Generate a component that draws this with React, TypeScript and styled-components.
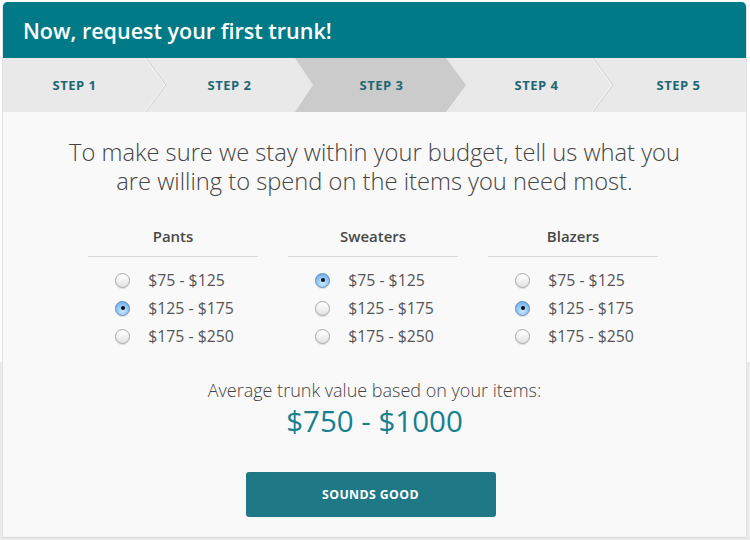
import React, { useState } from "react";
import styled, { createGlobalStyle } from "styled-components";

const Global = createGlobalStyle`
  html, body { margin: 0; padding: 0; }
  body {
    font-family: "Open Sans", "Liberation Sans", sans-serif;
    background: linear-gradient(to bottom, #ffffff 362px, #ebebeb 362px);
    min-height: 540px;
  }
`;

const Card = styled.div`
  margin: 2px 3px 0 2px;
  width: 745px;
  height: 536px;
  box-sizing: border-box;
  border-radius: 5px 5px 0 0;
  background: #f9f9f9;
  border-left: 1px solid #e2e2e2;
  border-right: 1px solid #e2e2e2;
  border-bottom: 1px solid #d8d8d8;
  overflow: hidden;
  display: flex;
  flex-direction: column;
`;

const Header = styled.div`
  height: 56px;
  margin: 0 -1px;
  background: #017a87;
  color: #fff;
  display: flex;
  align-items: center;
  padding: 0 21px;
  font-size: 21.5px;
  font-weight: 600;
  border-radius: 5px 5px 0 0;
`;

const StepBar = styled.div`
  display: grid;
  grid-template-columns: repeat(5, 1fr);
  height: 54px;
  background: #e9e9e9;
  margin: 0 -1px;
`;

const Step = styled.div<{ $active?: boolean }>`
  position: relative;
  display: flex;
  align-items: center;
  justify-content: center;
  font-size: 13px;
  font-weight: 700;
  letter-spacing: 0.5px;
  color: #1d6873;
  &::before {
    content: "";
    display: ${(p) => (p.$active ? "block" : "none")};
    position: absolute;
    top: 0;
    bottom: 0;
    left: -5px;
    right: -17px;
    background: #cbcbcb;
    clip-path: polygon(0 0, calc(100% - 20px) 0, 100% 50%, calc(100% - 20px) 100%, 0 100%, 18px 50%);
    z-index: 0;
  }
`;

const StepLabel = styled.span<{ $shift: number }>`
  position: relative;
  z-index: 2;
  margin-left: ${(p) => p.$shift * 2}px;
`;

const Chevron = styled.svg`
  position: absolute;
  top: 0;
  left: calc(100% - 7px);
  width: 24px;
  height: 54px;
  z-index: 1;
`;

const Body = styled.div`
  flex: 1;
  display: flex;
  flex-direction: column;
  align-items: center;
  padding-top: 26px;
`;

const Intro = styled.p`
  margin: 0;
  text-align: center;
  font-size: 23.7px;
  line-height: 29px;
  font-weight: 300;
  color: #444;
`;

const Columns = styled.div`
  display: flex;
  gap: 30px;
  margin-top: 30px;
  margin-right: 3px;
`;

const Column = styled.div`
  width: 170px;
  display: flex;
  flex-direction: column;
  align-items: center;
`;

const ColTitle = styled.div`
  width: 100%;
  text-align: center;
  font-size: 15px;
  font-weight: 600;
  color: #484848;
  padding-bottom: 10px;
  border-bottom: 1px solid #d9d9d9;
  line-height: 20px;
`;

const Options = styled.div`
  display: flex;
  flex-direction: column;
  margin-top: 9px;
  margin-left: 3px;
`;

const Option = styled.label`
  display: flex;
  align-items: center;
  gap: 18px;
  height: 28px;
  font-size: 15.8px;
  color: #555;
  cursor: pointer;
`;

const Radio = styled.span<{ $checked?: boolean }>`
  width: 15px;
  height: 15px;
  border-radius: 50%;
  box-sizing: border-box;
  position: relative;
  border: 1px solid ${(p) => (p.$checked ? "#5d8ec2" : "#a9a9a9")};
  background: ${(p) =>
    p.$checked
      ? "radial-gradient(circle at 50% 70%, #c9e6ff 0%, #8ec3f3 55%, #5a9fe0 100%)"
      : "linear-gradient(to bottom, #ffffff 0%, #f2f2f2 50%, #e1e1e1 100%)"};
  box-shadow: 0 1px 1px rgba(0, 0, 0, 0.12);
  &::after {
    content: "";
    display: ${(p) => (p.$checked ? "block" : "none")};
    position: absolute;
    width: 4px;
    height: 4px;
    border-radius: 50%;
    background: #111;
    top: 4.5px;
    left: 4.5px;
  }
`;

const AvgText = styled.div`
  margin-top: 28px;
  font-size: 18px;
  font-weight: 300;
  color: #444;
  line-height: 24px;
`;

const AvgValue = styled.div`
  font-size: 29.5px;
  color: #15818e;
  line-height: 38px;
`;

const Button = styled.button`
  margin-top: 32px;
  margin-right: 8px;
  width: 250px;
  height: 45px;
  border: none;
  border-radius: 3px;
  background: #1f7885;
  color: #fff;
  font-family: "Open Sans", "Liberation Sans", sans-serif;
  font-size: 12.3px;
  font-weight: 700;
  letter-spacing: 0.4px;
  cursor: pointer;
`;

const steps = [
  { label: "STEP 1", shift: -2 },
  { label: "STEP 2", shift: 4 },
  { label: "STEP 3", shift: 7 },
  { label: "STEP 4", shift: 13 },
  { label: "STEP 5", shift: 6 },
];
const ranges = ["$75 - $125", "$125 - $175", "$175 - $250"];
const groups = [
  { name: "Pants", initial: 1 },
  { name: "Sweaters", initial: 0 },
  { name: "Blazers", initial: 1 },
];

export default function App() {
  const active = 2;
  const [sel, setSel] = useState<number[]>(groups.map((g) => g.initial));
  return (
    <>
      <Global />
      <Card>
        <Header>Now, request your first trunk!</Header>
        <StepBar>
          {steps.map((s, i) => (
            <Step key={s.label} $active={i === active}>
              <StepLabel $shift={s.shift}>{s.label}</StepLabel>
              {i < steps.length - 1 && i !== active && i + 1 !== active && (
                <Chevron viewBox="0 0 24 54">
                  <polyline points="2,0 22,27 2,54" fill="none" stroke="#f6f6f6" strokeWidth="1" transform="translate(-1.2 0)" />
                  <polyline points="2,0 22,27 2,54" fill="none" stroke="#d3d3d3" strokeWidth="1" />
                </Chevron>
              )}
            </Step>
          ))}
        </StepBar>
        <Body>
          <Intro>
            To make sure we stay within your budget, tell us what you
            <br />
            are willing to spend on the items you need most.
          </Intro>
          <Columns>
            {groups.map((g, gi) => (
              <Column key={g.name}>
                <ColTitle>{g.name}</ColTitle>
                <Options>
                  {ranges.map((r, ri) => (
                    <Option
                      key={r}
                      onClick={() => setSel((p) => p.map((v, k) => (k === gi ? ri : v)))}
                    >
                      <Radio $checked={sel[gi] === ri} />
                      {r}
                    </Option>
                  ))}
                </Options>
              </Column>
            ))}
          </Columns>
          <AvgText>Average trunk value based on your items:</AvgText>
          <AvgValue>$750 - $1000</AvgValue>
          <Button>SOUNDS GOOD</Button>
        </Body>
      </Card>
    </>
  );
}
